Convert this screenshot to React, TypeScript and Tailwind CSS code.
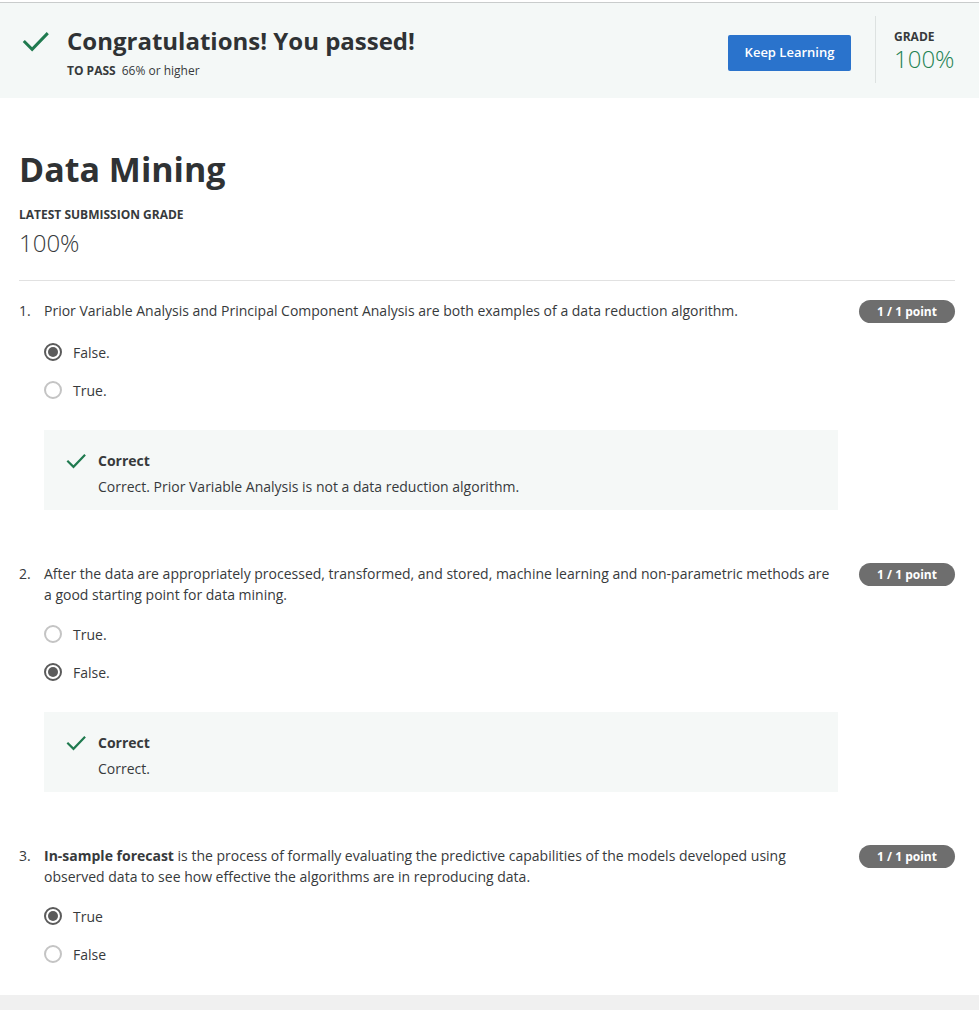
import type { ReactNode } from "react";

type Option = { label: string; selected: boolean };

type Question = {
  num: number;
  text: ReactNode;
  options: Option[];
  feedback?: string;
};

const questions: Question[] = [
  {
    num: 1,
    text: "Prior Variable Analysis and Principal Component Analysis are both examples of a data reduction algorithm.",
    options: [
      { label: "False.", selected: true },
      { label: "True.", selected: false },
    ],
    feedback: "Correct. Prior Variable Analysis is not a data reduction algorithm.",
  },
  {
    num: 2,
    text: "After the data are appropriately processed, transformed, and stored, machine learning and non-parametric methods are a good starting point for data mining.",
    options: [
      { label: "True.", selected: false },
      { label: "False.", selected: true },
    ],
    feedback: "Correct.",
  },
  {
    num: 3,
    text: (
      <>
        <span className="font-bold">In-sample forecast</span> is the process of formally evaluating the
        predictive capabilities of the models developed using observed data to see how effective the
        algorithms are in reproducing data.
      </>
    ),
    options: [
      { label: "True", selected: true },
      { label: "False", selected: false },
    ],
  },
];

function Check({ size, className }: { size: number; className?: string }) {
  return (
    <svg width={size} height={size} viewBox="0 0 24 24" fill="none" className={className}>
      <path d="M2.5 12.5 L9 19 L22 5.5" stroke="currentColor" strokeWidth="2.6" strokeLinecap="square" />
    </svg>
  );
}

function Radio({ selected }: { selected: boolean }) {
  if (selected) {
    return (
      <span className="flex h-[18px] w-[18px] items-center justify-center rounded-full border-2 border-[#5b5b5b]">
        <span className="h-[10px] w-[10px] rounded-full bg-[#5b5b5b]" />
      </span>
    );
  }
  return <span className="h-[18px] w-[18px] rounded-full border-2 border-[#c4c4c4]" />;
}

function QuestionBlock({ q }: { q: Question }) {
  return (
    <div>
      <div className="flex items-start">
        <div className="w-[25px] shrink-0 text-[14px] leading-[21px]">{q.num}.</div>
        <div className="mr-[24px] max-w-[792px] flex-1 text-[14px] leading-[21px]">{q.text}</div>
        <div className="ml-auto flex h-[23px] w-[96px] shrink-0 items-center justify-center rounded-full bg-[#6e6e6e] text-[12px] font-bold text-white">
          1 / 1 point
        </div>
      </div>
      <div className="mt-[10px] pl-[25px]">
        {q.options.map((o) => (
          <div key={o.label} className="flex h-[38px] items-center">
            <Radio selected={o.selected} />
            <span className="ml-[11px] text-[14px]">{o.label}</span>
          </div>
        ))}
      </div>
      {q.feedback ? (
        <div className="ml-[25px] mt-[21px] h-[80px] w-[794px] bg-[#f5f8f7] pl-[22px] pt-[20px]">
          <div className="flex items-center">
            <Check size={20} className="text-[#1f7a4f]" />
            <span className="ml-[12px] text-[14px] font-bold leading-[21px]">Correct</span>
          </div>
          <div className="mt-[5px] pl-[32px] text-[14px] leading-[21px]">{q.feedback}</div>
        </div>
      ) : null}
    </div>
  );
}

export default function App() {
  return (
    <div className="min-h-[1010px] bg-white font-['Open_Sans',sans-serif] text-[#373a3c]">
      <div className="pt-[2px]">
        <div className="flex h-[96px] border-t border-[#c9cccc] bg-[#f4f8f7]">
          <div className="flex flex-1 items-start pl-[22px] pt-[22px]">
            <Check size={27} className="mt-[3px] text-[#1f7a4f]" />
            <div className="ml-[18px]">
              <div className="text-[24px] font-bold leading-[32px] text-[#2f3234]">Congratulations! You passed!</div>
              <div className="mt-[6px] text-[12px] leading-[16px]">
                <span className="font-bold">TO PASS</span>
                <span className="ml-[6px]">66% or higher</span>
              </div>
            </div>
          </div>
          <div className="flex items-start pr-[24px]">
            <button className="mt-[32px] h-[36px] w-[123px] rounded-[2px] bg-[#2a73cc] text-[13px] font-semibold text-white">
              Keep Learning
            </button>
            <div className="ml-[24px] mt-[13px] h-[67px] w-px bg-[#dde2e1]" />
            <div className="ml-[18px] w-[61px] pt-[26px]">
              <div className="text-[12px] font-bold leading-[16px]">GRADE</div>
              <div className="text-[24px] font-light leading-[28px] text-[#1f8354]">100%</div>
            </div>
          </div>
        </div>
      </div>

      <div className="pl-[19px] pr-[24px]">
        <h1 className="mt-[48px] text-[34px] font-bold leading-[46px] text-[#2f3234]">Data Mining</h1>
        <div className="mt-[15px] text-[12px] font-bold leading-[16px]">LATEST SUBMISSION GRADE</div>
        <div className="mt-[4px] text-[24px] font-light leading-[32px]">100%</div>
        <div className="mt-[21px] h-px bg-[#e1e1e1]" />

        <div className="mt-[19px]">
          <QuestionBlock q={questions[0]} />
        </div>
        <div className="mt-[53px]">
          <QuestionBlock q={questions[1]} />
        </div>
        <div className="mt-[53px] pb-[22px]">
          <QuestionBlock q={questions[2]} />
        </div>
      </div>
      <div className="h-[20px] bg-[#f0f0f0]" />
    </div>
  );
}
